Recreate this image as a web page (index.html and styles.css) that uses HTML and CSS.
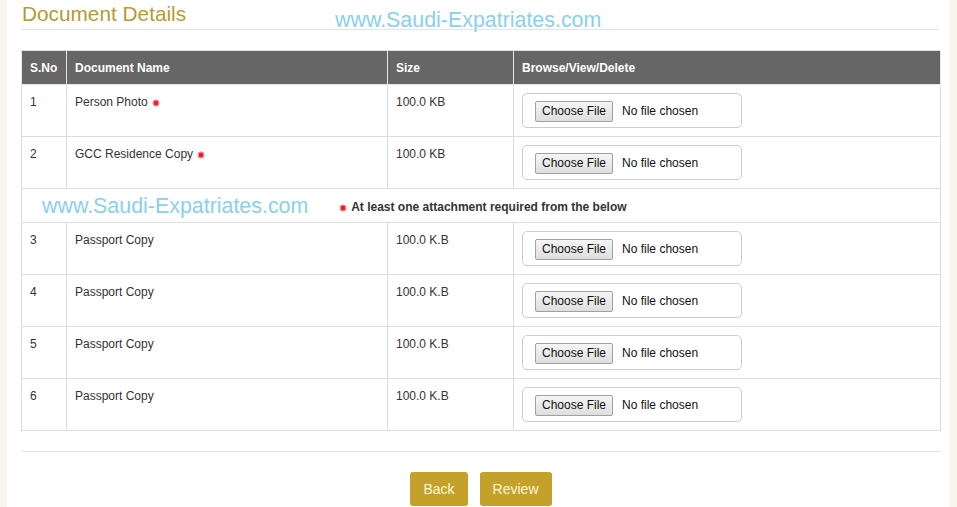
FILE: index.html
```html
<!DOCTYPE html>
<html>
<head>
<meta charset="utf-8">
<link rel="stylesheet" href="styles.css">
</head>
<body>
<div class="page">
  <div class="title-bar">
    <h1 class="title">Document Details</h1>
    <span class="watermark watermark-top">www.Saudi-Expatriates.com</span>
  </div>

  <table class="docs">
    <colgroup>
      <col class="c-no"><col class="c-name"><col class="c-size"><col class="c-file">
    </colgroup>
    <thead>
      <tr><th>S.No</th><th>Document Name</th><th>Size</th><th>Browse/View/Delete</th></tr>
    </thead>
    <tbody>
      <tr>
        <td>1</td>
        <td>Person Photo <svg class="star" viewBox="0 0 10 10"><path d="M5 0.6V9.4M0.6 5H9.4M1.9 1.9L8.1 8.1M8.1 1.9L1.9 8.1"/><circle cx="5" cy="5" r="2.6"/></svg></td>
        <td>100.0 KB</td>
        <td class="file-cell"><div class="file-box"><span class="choose">Choose File</span><span class="nofile">No file chosen</span></div></td>
      </tr>
      <tr>
        <td>2</td>
        <td>GCC Residence Copy <svg class="star" viewBox="0 0 10 10"><path d="M5 0.6V9.4M0.6 5H9.4M1.9 1.9L8.1 8.1M8.1 1.9L1.9 8.1"/><circle cx="5" cy="5" r="2.6"/></svg></td>
        <td>100.0 KB</td>
        <td class="file-cell"><div class="file-box"><span class="choose">Choose File</span><span class="nofile">No file chosen</span></div></td>
      </tr>
      <tr class="notice-row">
        <td colspan="4">
          <div class="notice">
            <span class="watermark">www.Saudi-Expatriates.com</span>
            <span class="notice-text"><svg class="star" viewBox="0 0 10 10"><path d="M5 0.6V9.4M0.6 5H9.4M1.9 1.9L8.1 8.1M8.1 1.9L1.9 8.1"/><circle cx="5" cy="5" r="2.6"/></svg> At least one attachment required from the below</span>
          </div>
        </td>
      </tr>
      <tr>
        <td>3</td><td>Passport Copy</td><td>100.0 K.B</td>
        <td class="file-cell"><div class="file-box"><span class="choose">Choose File</span><span class="nofile">No file chosen</span></div></td>
      </tr>
      <tr>
        <td>4</td><td>Passport Copy</td><td>100.0 K.B</td>
        <td class="file-cell"><div class="file-box"><span class="choose">Choose File</span><span class="nofile">No file chosen</span></div></td>
      </tr>
      <tr>
        <td>5</td><td>Passport Copy</td><td>100.0 K.B</td>
        <td class="file-cell"><div class="file-box"><span class="choose">Choose File</span><span class="nofile">No file chosen</span></div></td>
      </tr>
      <tr>
        <td>6</td><td>Passport Copy</td><td>100.0 K.B</td>
        <td class="file-cell"><div class="file-box"><span class="choose">Choose File</span><span class="nofile">No file chosen</span></div></td>
      </tr>
    </tbody>
  </table>

  <div class="divider"></div>

  <div class="actions">
    <button class="btn">Back</button>
    <button class="btn">Review</button>
  </div>
</div>
</body>
</html>
```

FILE: styles.css
```css
html, body {
  margin: 0;
  padding: 0;
}
body {
  background: #f8f5ed;
  font-family: "Liberation Sans", Arial, sans-serif;
  color: #333;
  height: 507px;
  overflow: hidden;
}
.page {
  margin: 0 7px;
  background: #fff;
  padding: 0 9px 20px 14px;
  min-height: 507px;
  box-sizing: border-box;
}
.title-bar {
  position: relative;
  border-bottom: 1px solid #e4e4e4;
  height: 29px;
  box-sizing: content-box;
  margin-right: 2px;
}
.title {
  margin: 0;
  padding-top: 2px;
  padding-left: 1px;
  font-size: 20.8px;
  line-height: 24px;
  font-weight: normal;
  color: #b49b33;
}
.watermark {
  font-size: 21.4px;
  line-height: 24px;
  color: #8ad0ec;
  white-space: nowrap;
}
.watermark-top {
  position: absolute;
  left: 314px;
  top: 8px;
}
.docs {
  margin-top: 20px;
  width: 920px;
  border-collapse: collapse;
  table-layout: fixed;
  font-size: 12px;
}
.c-no { width: 45px; }
.c-name { width: 321px; }
.c-size { width: 126px; }
.docs th {
  background: #666;
  color: #fff;
  font-weight: bold;
  text-align: left;
  height: 34px;
  padding: 0 8px;
  border: 1px solid #e6e6e6;
  border-top-color: #ddd;
  box-sizing: border-box;
}
.docs td {
  border: 1px solid #ddd;
  vertical-align: top;
  padding: 10px 8px 0;
  line-height: 14px;
  height: 52px;
  box-sizing: border-box;
}
.docs td.file-cell {
  padding: 8px 9px 0 8px;
}
.star {
  width: 8px;
  height: 8px;
  vertical-align: -1px;
  margin-left: 1px;
}
.star path {
  stroke: #e8202a;
  stroke-width: 1.5;
  fill: none;
}
.star circle {
  fill: #e8202a;
}
.file-box {
  width: 220px;
  height: 35px;
  box-sizing: border-box;
  border: 1px solid #ccc;
  border-radius: 5px;
  display: flex;
  align-items: center;
  padding-left: 12px;
}
.choose {
  display: inline-flex;
  align-items: center;
  height: 21px;
  box-sizing: border-box;
  padding: 0 6px;
  border: 1px solid #a0a0a0;
  border-radius: 2px;
  background: linear-gradient(#f6f6f6, #dedede);
  color: #111;
  font-size: 12px;
  margin-top: 1px;
}
.nofile {
  margin-left: 9px;
  color: #111;
  font-size: 12px;
  margin-top: 1px;
}
.docs tr.notice-row td {
  height: 34px;
  padding: 5px 0 0 20px;
}
.notice {
  display: flex;
  align-items: baseline;
}
.notice-text {
  margin-left: 31px;
  font-weight: bold;
  color: #333;
  font-size: 12px;
  position: relative;
  top: -2px;
}
.notice-text .star {
  margin-left: 0;
  margin-right: 1px;
}
.divider {
  margin-top: 20px;
  border-top: 1px solid #e4e4e4;
  width: 920px;
}
.actions {
  width: 920px;
  display: flex;
  justify-content: center;
  gap: 12px;
  margin-top: 20px;
}
.btn {
  height: 34px;
  padding: 0 13px;
  background: #c3a12b;
  color: #fff7d6;
  border: none;
  border-radius: 3px;
  font-family: "Liberation Sans", Arial, sans-serif;
  font-size: 14px;
}
```
